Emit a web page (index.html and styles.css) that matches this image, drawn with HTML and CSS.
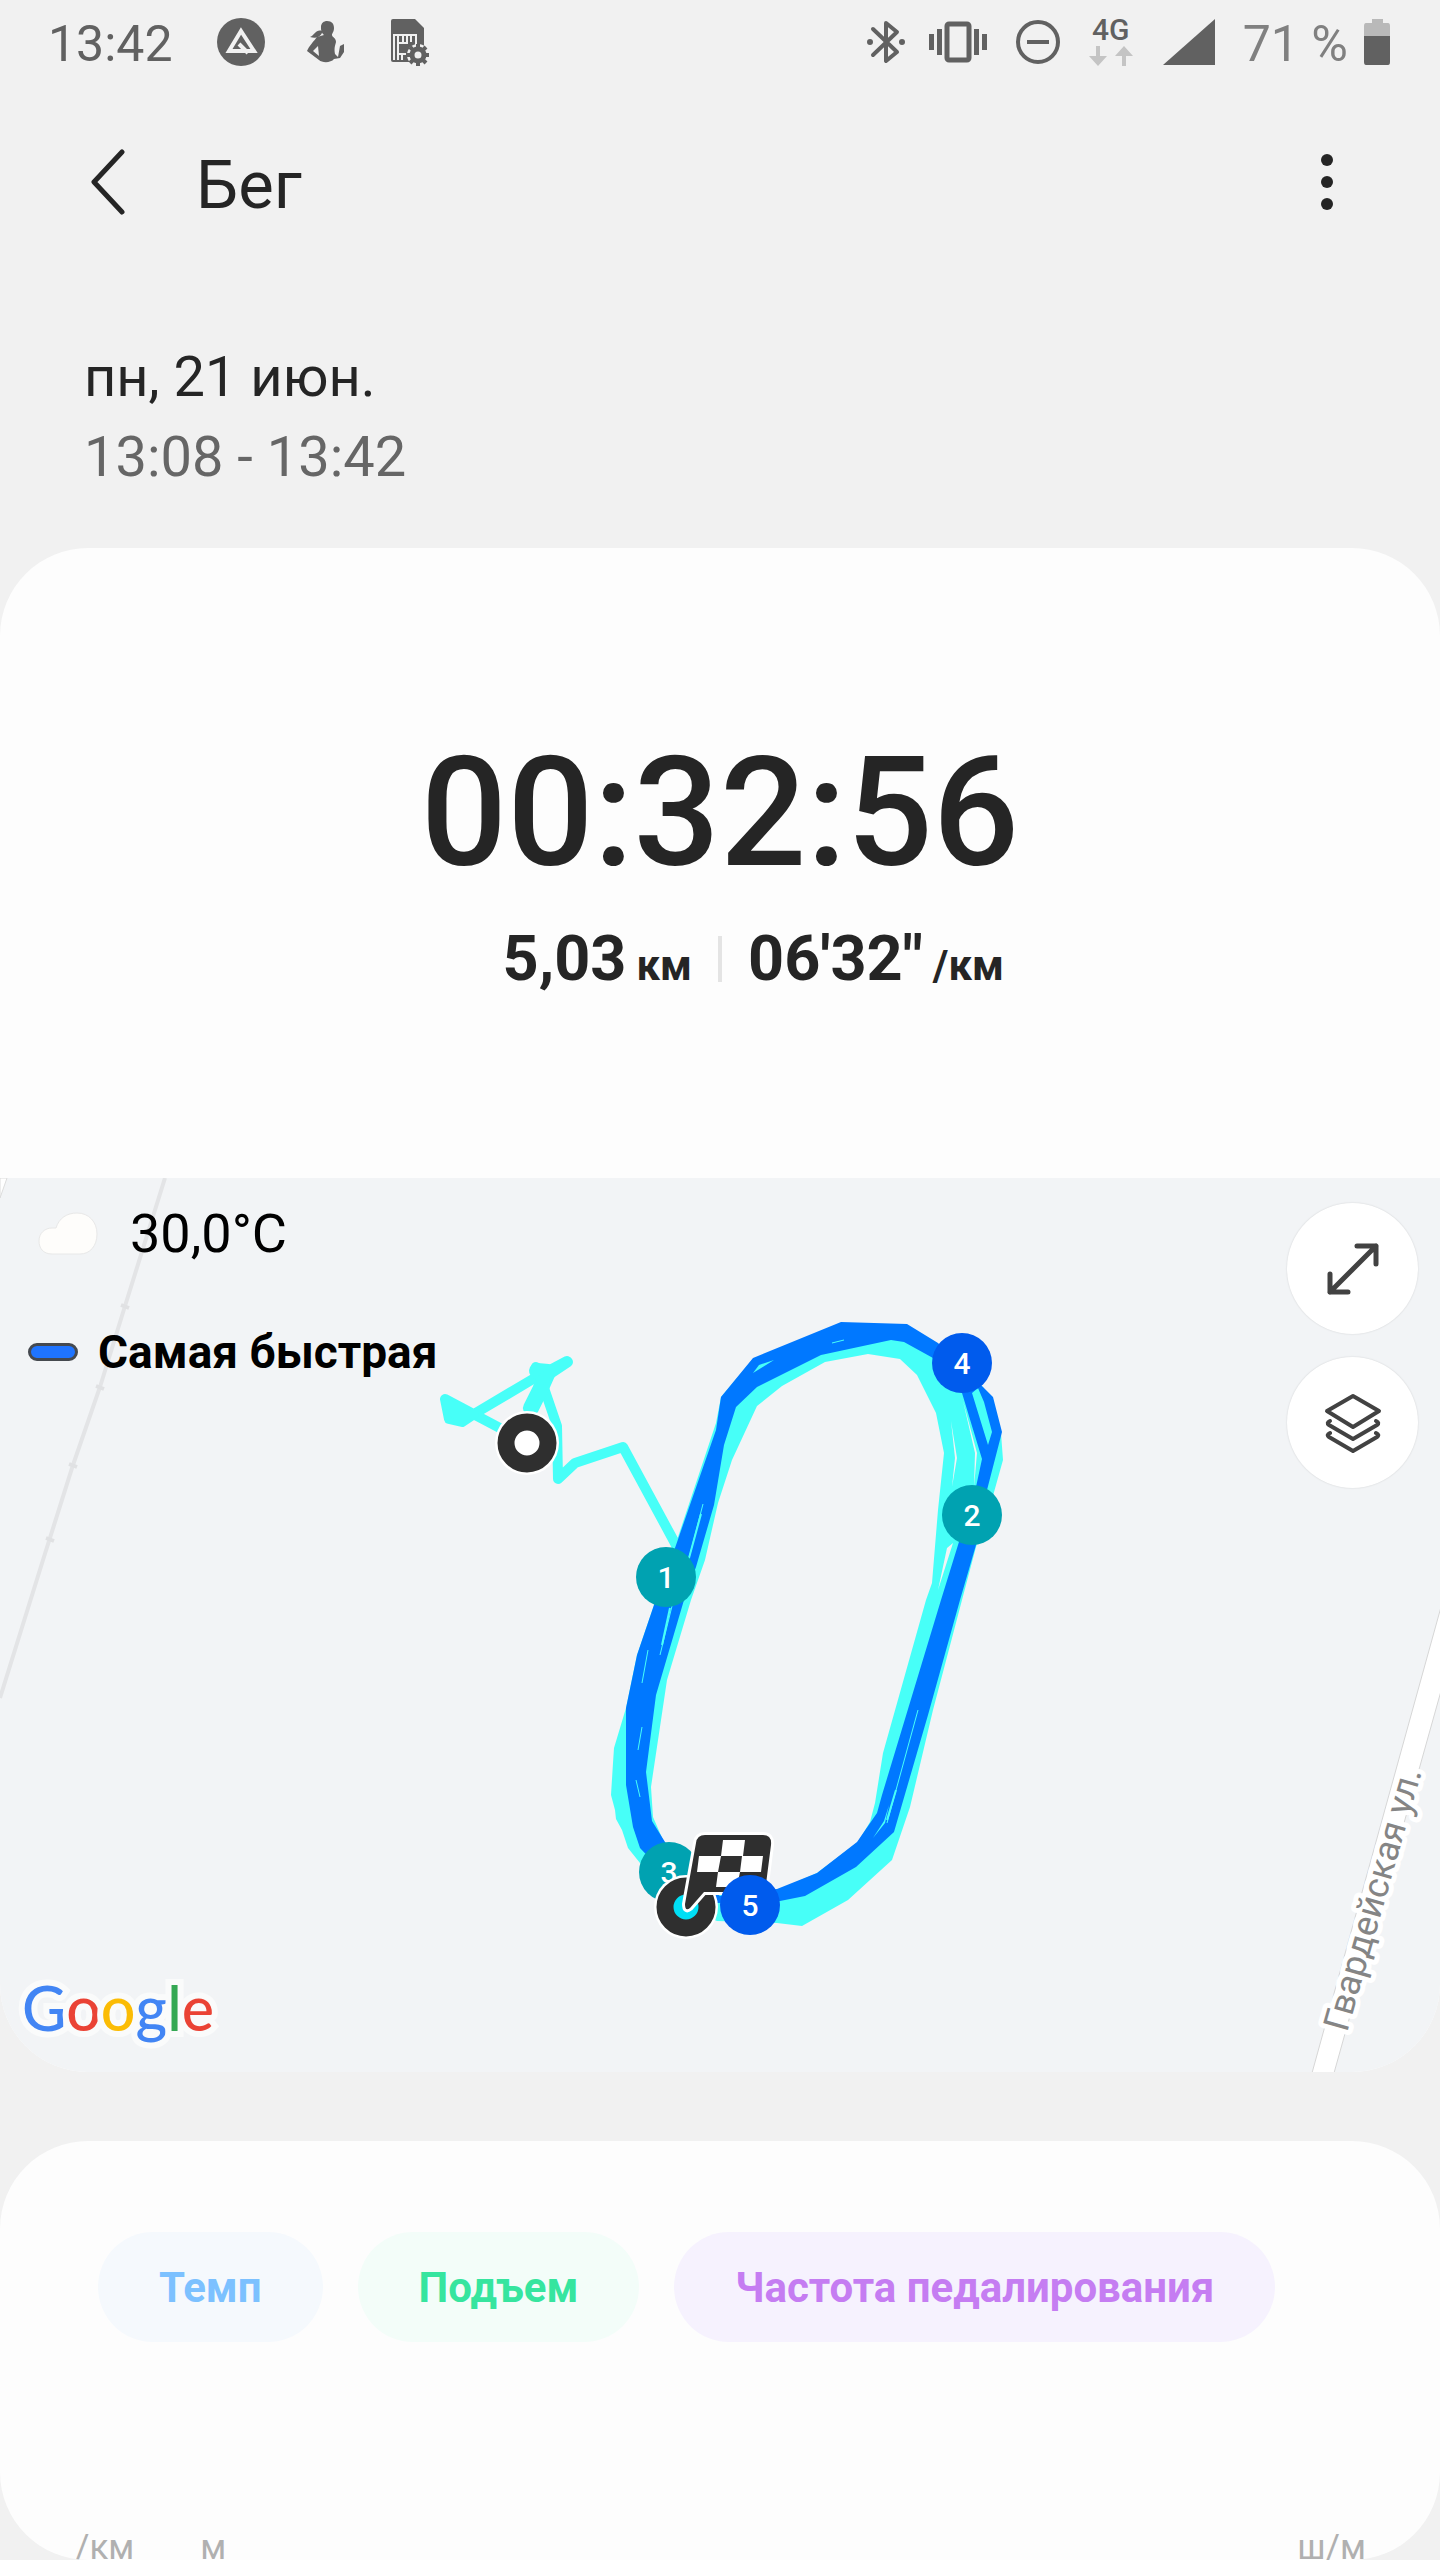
FILE: index.html
```html
<!DOCTYPE html>
<html lang="ru">
<head>
    <meta charset="UTF-8">
    <meta name="viewport" content="width=device-width, initial-scale=1.0">
    <title>Бег</title>
    <link rel="stylesheet" href="styles.css">
</head>
<body>
    <div class="status-bar">
        <span class="status-time">13:42</span>
        <div class="status-left">
            <svg width="48" height="48" viewBox="0 0 48 48">
                <circle cx="24" cy="24" r="24" fill="#616161"/>
                <path d="M24 13 L37 33 H12 Z" fill="none" stroke="#f1f1f1" stroke-width="4"/>
                <path d="M22 26 L31 35" stroke="#f1f1f1" stroke-width="4"/>
            </svg>
            <svg width="38" height="44" viewBox="0 0 38 44" fill="#616161">
                <path d="M20 1 C25 1 27 4 27 8 C27 12 25 13 25 15 C25 17 29 18 29 22 C28 26 27 28 28 34 L31 37 L33 26 L37 24 L37 32 L33 38 L27 39 C24 43 15 43 12 40 L0 31 C2 26 7 21 10 17 L17 15 C14 12 14 10 14 7 C14 3 17 1 20 1 Z"/>
                <path d="M15 11 C9 9 8 15 3 17 C9 19 13 17 15 13 Z"/>
                <path d="M11 26 L6 31 L12 36 Z" fill="#f1f1f1"/>
            </svg>
            <svg width="38" height="48" viewBox="0 0 38 48">
                <path d="M2 1 H24 L33 10 V44 H2 Q0 44 0 42 V3 Q0 1 2 1 Z" fill="#616161"/>
                <path d="M3 42 V17 H25 V27 M7 42 V18 M12 17 V24 M16 17 V24 M20 17 V24 M8 25 H17 M8 36 H15 M11 36 V42" fill="none" stroke="#f1f1f1" stroke-width="2"/>
                <circle cx="27" cy="37" r="11" fill="#f1f1f1"/>
                <circle cx="27" cy="37" r="6" fill="none" stroke="#616161" stroke-width="5"/>
                <path d="M27 26 V30 M27 44 V48 M16 37 H20 M34 37 H38 M19 29 L22 32 M32 42 L35 45 M35 29 L32 32 M22 42 L19 45" stroke="#616161" stroke-width="4"/>
            </svg>
        </div>
        <div class="status-right">
            <svg width="38" height="44" viewBox="0 0 38 44" fill="none" stroke="#616161" stroke-width="4" stroke-linejoin="round" stroke-linecap="round">
                <path d="M6 9 L30 32 L19 41 V3 L30 12 L6 35"/>
                <path d="M3 22 H3 M35 22 H35" stroke-width="6"/>
            </svg>
            <svg width="58" height="42" viewBox="0 0 58 42" fill="#616161">
                <rect x="18" y="3" width="22" height="36" rx="2" fill="none" stroke="#616161" stroke-width="5"/>
                <path d="M0 13 H5 V29 H0 Z M8 8 H13 V34 H8 Z M45 8 H50 V34 H45 Z M53 13 H58 V29 H53 Z"/>
            </svg>
            <svg width="46" height="46" viewBox="0 0 46 46" fill="none" stroke="#616161">
                <circle cx="23" cy="23" r="20" stroke-width="4"/>
                <path d="M12 23 H34" stroke-width="4"/>
            </svg>
            <div class="network">
                <span>4G</span>
                <svg width="44" height="20" viewBox="0 0 44 20" fill="#c4c4c4">
                    <path d="M7 0 H11 V10 H18 L9 20 L0 10 H7 Z M33 20 H37 V10 H44 L35 0 L26 10 H33 Z"/>
                </svg>
            </div>
            <svg width="52" height="46" viewBox="0 0 52 46"><path d="M52 0 V46 H0 Z" fill="#616161"/></svg>
            <span class="battery-text">71 %</span>
            <svg width="26" height="46" viewBox="0 0 26 46">
                <path d="M8 0 H19 V4 H24 Q26 4 26 7 V17 H0 V7 Q0 4 2 4 H8 Z" fill="#b9b9b9"/>
                <path d="M0 17 H26 V43 Q26 46 24 46 H2 Q0 46 0 43 Z" fill="#616161"/>
            </svg>
        </div>
    </div>

    <header class="app-bar">
        <button class="icon-button" aria-label="Назад">
            <svg width="36" height="66" viewBox="0 0 36 66" fill="none" stroke="#252525" stroke-width="5" stroke-linecap="round" stroke-linejoin="round">
                <path d="M32 3 L4 33 L32 63"/>
            </svg>
        </button>
        <h1>Бег</h1>
        <button class="icon-button more" aria-label="Ещё">
            <svg width="12" height="56" viewBox="0 0 12 56" fill="#252525">
                <circle cx="6" cy="6" r="6"/>
                <circle cx="6" cy="28" r="6"/>
                <circle cx="6" cy="50" r="6"/>
            </svg>
        </button>
    </header>

    <div class="date">
        <div>пн, 21 июн.</div>
        <div class="date-range">13:08 - 13:42</div>
    </div>

    <main>
        <section class="card">
            <div class="timer">00:32:56</div>
            <div class="stats">
                <div class="stat stat-distance"><span>5,03</span><small>км</small></div>
                <div class="divider"></div>
                <div class="stat"><span>06'32"</span><small>/км</small></div>
            </div>

            <div class="map">
                <svg class="map-canvas" viewBox="0 1178 1440 894" preserveAspectRatio="xMidYMid slice">
                    <!-- railway -->
                    <path d="M165 1178 L125 1306 L100 1387 L73 1465 L43 1560 L0 1698" fill="none" stroke="#e3e4e6" stroke-width="4"/>
                    <path d="M121 1305 L129 1308 M96 1386 L104 1389 M69 1464 L77 1467 M46 1538 L54 1541" stroke="#e0e1e3" stroke-width="4"/>
                    <!-- streets -->
                    <path d="M0 1178 H7 L0 1198 Z" fill="#fff" stroke="#dcdcdc"/>
                    <path d="M1441 1607 L1312 2073 H1334 L1441 1691 Z" fill="#fff" stroke="#d6d6d6"/>
                    <text class="street" transform="translate(1347 2033) rotate(-74)">Гвардейская ул.</text>

                    <!-- warm-up part of the route -->
                    <g fill="none" stroke="#47fff8" stroke-width="10" stroke-linejoin="round" stroke-linecap="round">
                        <path d="M528 1443 L445 1399 L449 1419 L462 1422 L474 1414 L533 1379 L567 1361"/>
                        <path d="M447 1401 L455 1414 L474 1414"/>
                        <path d="M536 1367 L542 1382 L557 1426 L558 1479 L575 1463 L623 1447 L676 1545"/>
                        <path d="M537 1371 L548 1372 L540 1390 L531 1408" stroke-width="16"/>
                        <path d="M541 1380 L568 1362"/>
                    </g>

                    <!-- slower laps -->
                    <path fill="#47fff8" fill-rule="evenodd" d="M716 1423 L721 1397 L753 1359 L841 1325 L907 1326 L965 1365 L993 1400 L1001 1433 L1003 1460 L989 1510 L976 1547 L962 1600 L933 1710 L910 1807 L892 1860 L848 1900 L802 1926 L777 1923 L717 1921 L680 1905 L640 1863 L628 1848 L622 1830 L616 1819 L615 1810 L611 1795 L613 1763 L614 1748 L626 1708 L637 1655 L654 1605 L675 1546 Z
                        M868 1354 L825 1362 L782 1386 L757 1406 L732 1460 L718 1503 L705 1560 L691 1600 L667 1680 L651 1787 L653 1817 L663 1840 L690 1875 L740 1893 L780 1889 L817 1873 L858 1842 L870 1822 L875 1803 L883 1753 L926 1600 L932 1583 L938 1510 L944 1453 L936 1413 L917 1375 L900 1359 Z"/>
                    <path fill="#f2f4f6" d="M951 1421 L957 1458 L952 1487 L955 1458 Z M963 1401 L977 1453 L974 1487 L975 1453 Z M953 1543 L938 1590 L947 1548 Z"/>

                    <!-- fastest laps -->
                    <path fill="#0078ff" fill-rule="evenodd" d="M721 1397 L753 1358 L841 1322 L907 1324 L938 1343 L983 1387 L993 1397 L1002 1432 L987 1490 L976 1545 L960 1600 L928 1715 L894 1832 L856 1867 L805 1896 L780 1901 L717 1903 L680 1890 L640 1848 L633 1827 L626 1785 L626 1708 L637 1655 L654 1605 L675 1548 L716 1430 Z
                        M891 1340 L821 1355 L757 1387 L736 1407 L724 1445 L714 1505 L696 1567 L684 1600 L656 1695 L646 1772 L652 1821 L665 1842 L690 1875 L720 1896 L777 1889 L817 1873 L857 1842 L877 1813 L882 1795 L941 1600 L958 1545 L976 1487 L982 1459 L962 1393 L933 1358 L904 1342 Z"/>
                    <path fill="#47fff8" d="M972 1393 L978 1388 L984 1402 L992 1432 L988 1445 Z M753 1373 L759 1365 L774 1360 Z M889 1805 L885 1823 L873 1838 L884 1821 Z"/>
                    <path fill="none" stroke="#47fff8" stroke-width="1" d="M703 1504 L688 1562 M672 1606 L660 1655 M648 1650 L642 1683 M642 1727 L638 1750 M636 1780 L640 1797 M918 1710 L887 1823 M832 1343 L844 1340"/>
                    <path fill="none" stroke="#47fff8" stroke-width="2" d="M701 1514 L689 1558 M670 1608 L662 1645 M896 1790 L887 1820"/>

                    <!-- kilometre markers -->
                    <g class="marker">
                        <circle cx="666" cy="1577" r="30" fill="#00a2b1"/>
                        <text x="666" y="1588">1</text>
                        <circle cx="972" cy="1515" r="30" fill="#00a2b1"/>
                        <text x="972" y="1526">2</text>
                        <circle cx="669" cy="1872" r="30" fill="#00a2b1"/>
                        <text x="669" y="1883">3</text>
                        <circle cx="962" cy="1363" r="30" fill="#005bed"/>
                        <text x="962" y="1374">4</text>
                    </g>

                    <!-- start -->
                    <circle cx="527" cy="1443" r="32" fill="#fff"/>
                    <circle cx="527" cy="1443" r="21" fill="#fff" stroke="#2f2f2f" stroke-width="17"/>

                    <!-- finish -->
                    <circle cx="686" cy="1907" r="32" fill="#fff"/>
                    <circle cx="686" cy="1907" r="21" fill="#00dff5" stroke="#2f2f2f" stroke-width="17"/>
                    <path d="M705 1835 H763 Q772 1835 771 1845 L766 1884 Q765 1892 757 1892 H704 L690 1908 Q685 1912 685 1904 L696 1843 Q697 1835 705 1835 Z" fill="#2f2f2f" stroke="#fff" stroke-width="6" paint-order="stroke"/>
                    <path d="M723 1840 H745 L743 1856 H721 Z M699 1856 H721 L718 1872 H697 Z M742 1856 H763 L761 1872 H740 Z M718 1872 H740 L737 1887 H716 Z" fill="#fff"/>

                    <g class="marker">
                        <circle cx="750" cy="1905" r="30" fill="#005bed"/>
                        <text x="750" y="1916">5</text>
                    </g>
                </svg>

                <div class="map-info">
                    <div class="weather">
                        <svg width="60" height="44" viewBox="0 0 60 44">
                            <path d="M14 42 C5 42 1 36 1 29 C1 21 7 16 14 16 H18 C21 6 29 1 39 1 C51 1 59 10 59 22 C59 34 52 42 42 42 Z" fill="#fefdfb" stroke="#e8e8e8"/>
                        </svg>
                        <span>30,0°C</span>
                    </div>
                    <div class="legend">
                        <span class="legend-line"></span>
                        <span>Самая быстрая</span>
                    </div>
                </div>

                <div class="map-buttons">
                    <button class="round-button" aria-label="Развернуть карту">
                        <svg width="52" height="52" viewBox="0 0 52 52" fill="none" stroke="#424242" stroke-width="5" stroke-linecap="round" stroke-linejoin="round">
                            <path d="M3 49 L49 3 M30 3 H49 V21 M3 31 V49 H21"/>
                        </svg>
                    </button>
                    <button class="round-button" aria-label="Слои">
                        <svg width="58" height="60" viewBox="0 0 58 60" fill="none" stroke="#424242" stroke-width="4" stroke-linecap="round" stroke-linejoin="round">
                            <path d="M29 3 L55 18 L29 34 L3 18 Z"/>
                            <path d="M6 28 Q2 30 5 32 L29 46 L53 32 Q56 30 52 28"/>
                            <path d="M6 40 Q2 42 5 44 L29 58 L53 44 Q56 42 52 40"/>
                        </svg>
                    </button>
                </div>

                <div class="google"><span class="g-blue">G</span><span class="g-red">o</span><span class="g-yellow">o</span><span class="g-blue">g</span><span class="g-green">l</span><span class="g-red">e</span></div>
            </div>
        </section>

        <section class="card chart-card">
            <div class="chips">
                <button class="chip chip-pace">Темп</button>
                <button class="chip chip-climb">Подъем</button>
                <button class="chip chip-cadence">Частота педалирования</button>
            </div>
            <div class="axis">
                <span>/км</span>
                <span>м</span>
                <span class="axis-right">ш/м</span>
            </div>
        </section>
    </main>
</body>
</html>
```

FILE: styles.css
```css
body {
    margin: 0;
    background-color: #f1f1f1;
    color: #252525;
    font-family: Roboto, "Noto Sans", sans-serif;
}
svg {
    display: block;
    flex: none;
}
button {
    padding: 0;
    border: none;
    background: none;
    font-family: inherit;
    cursor: pointer;
}

/* status bar */
.status-bar {
    display: flex;
    align-items: center;
    height: 84px;
    padding: 0 50px 0 48px;
    color: #616161;
    font-size: 50px;
}
.status-time,
.battery-text {
    padding-top: 4px;
}
.status-left {
    display: flex;
    align-items: center;
    gap: 42px;
    margin-left: 44px;
}
.status-left svg:last-child {
    margin-left: 4px;
}
.status-right {
    display: flex;
    align-items: center;
    gap: 28px;
    margin-left: auto;
}
.status-right svg:first-child {
    margin-right: -4px;
}
.network {
    display: flex;
    flex-direction: column;
    align-items: center;
    gap: 4px;
    margin-right: 2px;
}
.network span {
    font-size: 30px;
    line-height: 24px;
    font-weight: 500;
}
.battery-text {
    color: #808080;
    margin-right: -12px;
}

/* app bar */
.app-bar {
    display: flex;
    align-items: center;
    height: 196px;
    padding: 0 107px 0 90px;
}
.app-bar h1 {
    margin: 0 0 0 70px;
    padding-top: 6px;
    font-size: 67px;
    font-weight: 400;
    line-height: 80px;
}
.more {
    margin-left: auto;
}

.date {
    padding: 57px 84px 51px;
    font-size: 56px;
    line-height: 80px;
}
.date-range {
    color: #666;
}

/* cards */
.card {
    background-color: #fdfdfd;
    border-radius: 88px;
    overflow: hidden;
}
.timer {
    padding-top: 185px;
    font-size: 152px;
    font-weight: 500;
    line-height: 160px;
    text-align: center;
}
.stats {
    display: grid;
    grid-template-columns: 1fr 4px 1fr;
    gap: 26px;
    align-items: center;
    padding: 26px 0 179px;
}
.stat {
    display: flex;
    align-items: baseline;
    gap: 10px;
    font-size: 63px;
    font-weight: 700;
    line-height: 80px;
    white-space: nowrap;
}
.stat small {
    font-size: 42px;
    line-height: 48px;
}
.stat-distance {
    justify-content: flex-end;
}
.divider {
    height: 46px;
    background-color: #e4e4e4;
}

/* map */
.map {
    position: relative;
    background-color: #f2f4f6;
}
.map-canvas {
    width: 100%;
    height: 894px;
}
.street {
    font-size: 36px;
    fill: #858585;
    stroke: #fff;
    stroke-width: 10px;
    stroke-linejoin: round;
    paint-order: stroke;
}
.marker text {
    font-size: 30px;
    font-weight: 500;
    fill: #fff;
    text-anchor: middle;
}
.map-info {
    position: absolute;
    top: 24px;
    left: 28px;
    color: #000;
}
.weather {
    display: flex;
    align-items: center;
    gap: 32px;
    padding-left: 10px;
    font-size: 54px;
    line-height: 64px;
}
.legend {
    display: flex;
    align-items: center;
    gap: 20px;
    margin-top: 54px;
    font-size: 46px;
    font-weight: 700;
    line-height: 64px;
}
.legend-line {
    box-sizing: border-box;
    width: 50px;
    height: 18px;
    border: 3px solid #45494f;
    border-radius: 9px;
    background-color: #1f74ff;
}
.map-buttons {
    position: absolute;
    top: 25px;
    right: 22px;
    display: flex;
    flex-direction: column;
    gap: 23px;
}
.round-button {
    display: flex;
    align-items: center;
    justify-content: center;
    width: 131px;
    height: 131px;
    border-radius: 50%;
    background-color: #fff;
    box-shadow: 0 0 2px rgba(0, 0, 0, 0.15);
}
.google {
    position: absolute;
    left: 22px;
    bottom: 24px;
    font-family: Lato, sans-serif;
    font-size: 61px;
    font-weight: 500;
    line-height: 80px;
    -webkit-text-stroke: 12px #fafbfb;
    paint-order: stroke fill;
}
.g-blue {
    color: #4285f4;
}
.g-red {
    color: #ea4335;
}
.g-yellow {
    color: #fbbc05;
}
.g-green {
    color: #34a853;
}

/* chart */
.chart-card {
    margin-top: 69px;
    padding-top: 91px;
}
.chips {
    display: flex;
    gap: 35px;
    padding: 0 98px;
}
.chip {
    height: 110px;
    padding: 0 61px;
    border-radius: 55px;
    font-size: 42px;
    font-weight: 700;
    white-space: nowrap;
}
.chip-pace {
    color: #7cc1ff;
    background-color: #f5f9fd;
}
.chip-climb {
    color: #36e59f;
    background-color: #f3fdf9;
}
.chip-cadence {
    color: #c57df2;
    background-color: #f6f2fe;
}
.axis {
    display: flex;
    gap: 66px;
    margin-top: 194px;
    padding: 0 74px 0 75px;
    color: #b0b0b0;
    font-size: 35px;
    line-height: 24px;
}
.axis-right {
    margin-left: auto;
}
```
